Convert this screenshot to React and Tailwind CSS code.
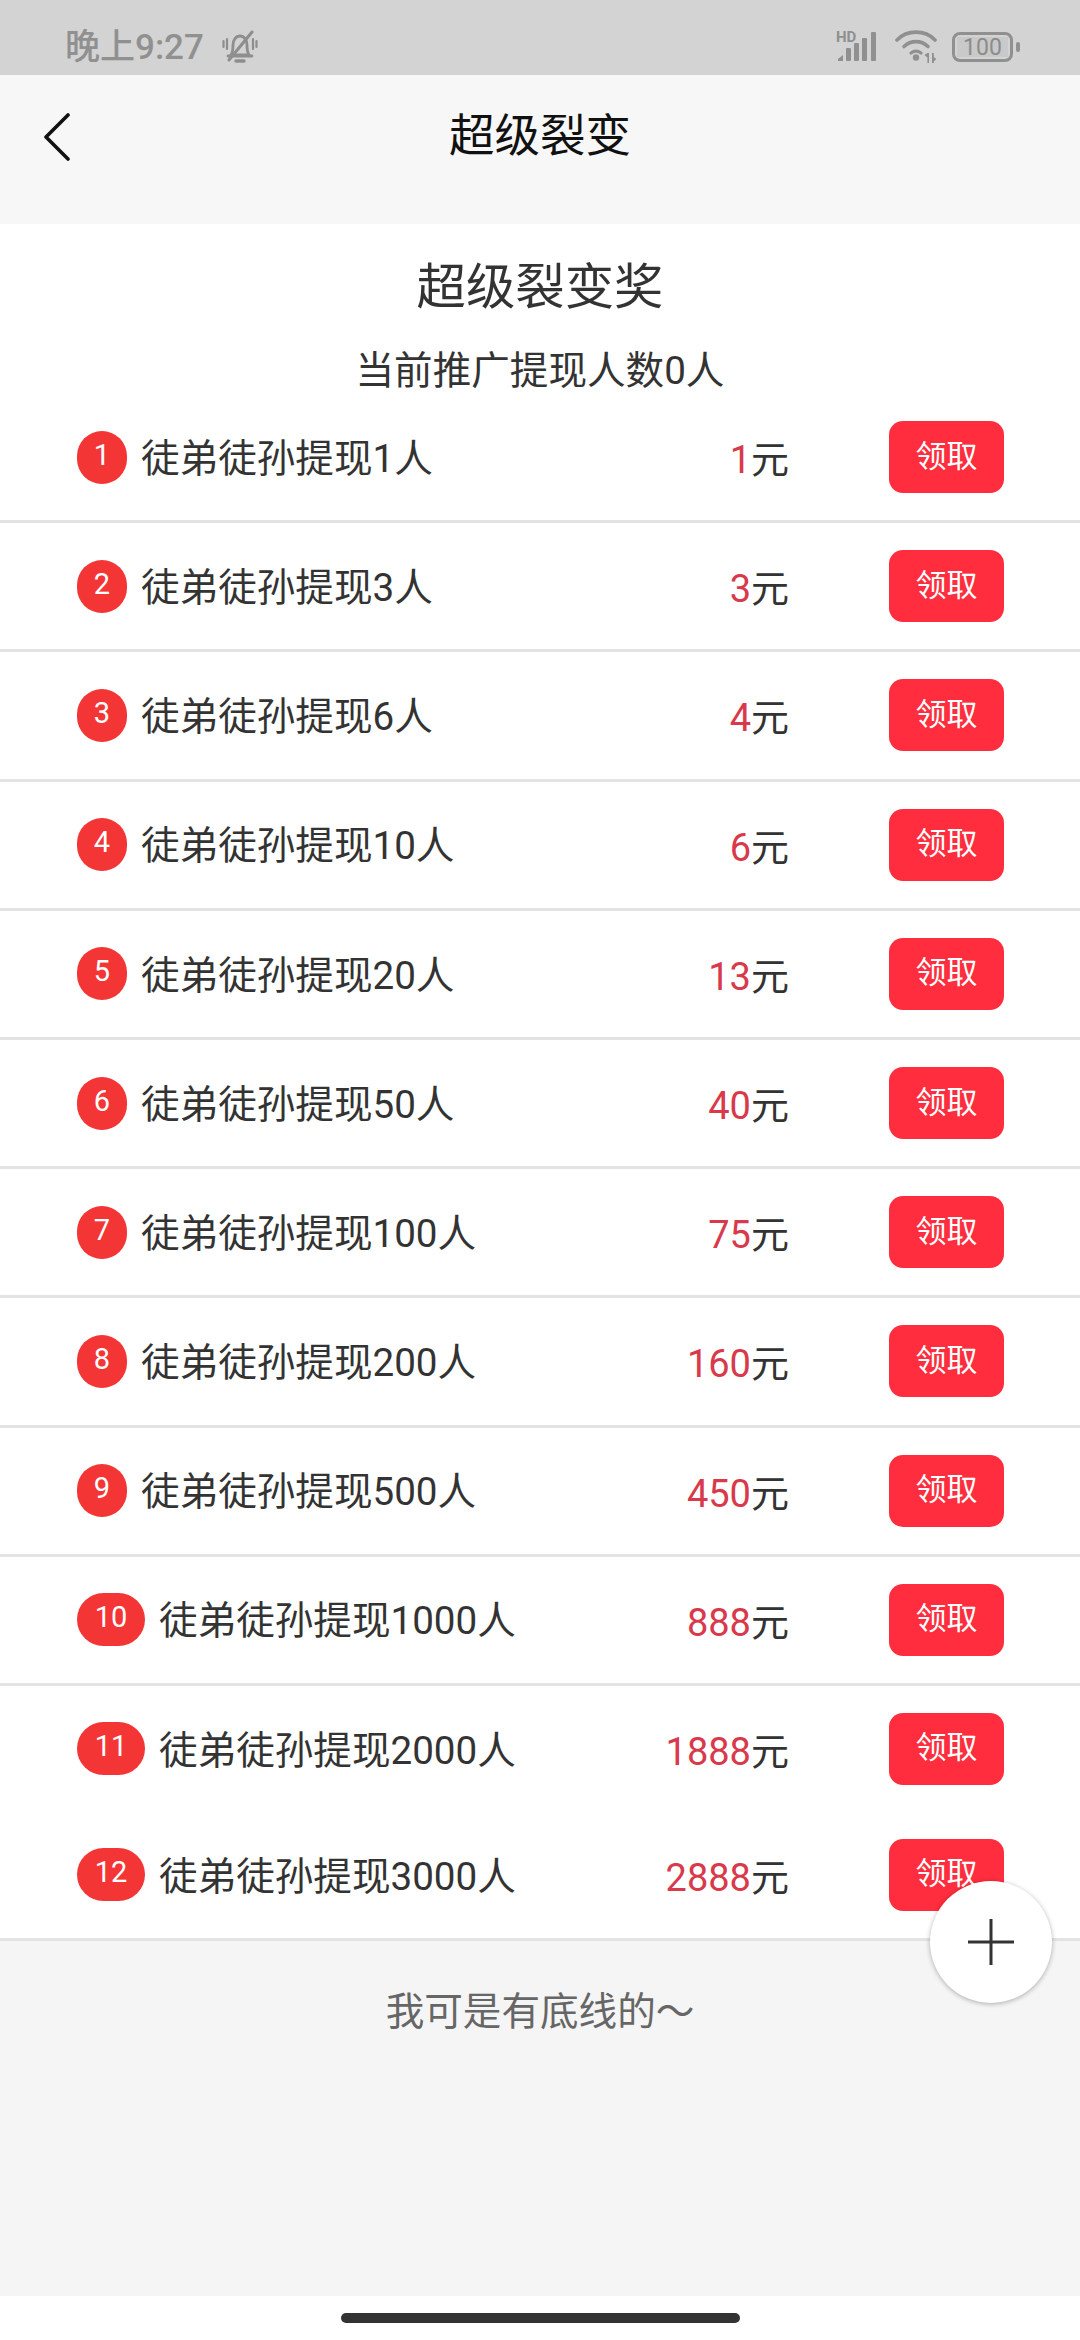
const rows = [
  ["1", "1人", "1"], ["2", "3人", "3"], ["3", "6人", "4"], ["4", "10人", "6"],
  ["5", "20人", "13"], ["6", "50人", "40"], ["7", "100人", "75"], ["8", "200人", "160"],
  ["9", "500人", "450"], ["10", "1000人", "888"], ["11", "2000人", "1888"], ["12", "3000人", "2888"],
];

const font = "[font-family:Roboto,'Noto_Sans_CJK_SC',sans-serif]";

function BellOff() {
  return (
    <svg width="36" height="34" viewBox="0 0 36 34" fill="none" stroke="#8e8e8e" strokeWidth="2.800" strokeLinecap="round">
      <path d="M9 25c2-3 2-6 2-10 0-5 3-9 7-9s7 4 7 9c0 4 0 7 2 10z" />
      <path d="M6 26h24" />
      <path d="M14 31h8" strokeWidth="3.400" />
      <path d="M5 9v10M1.500 11v6M31 9v10M34.500 11v6" strokeWidth="2.200" />
      <path d="M7 30 30 2" strokeWidth="3" />
    </svg>
  );
}

function Signal() {
  return (
    <div className="relative w-[46px] h-[32px]">
      <span className="absolute left-0 -top-[1px] text-[15px] leading-[15px] font-bold text-[#909090]">HD</span>
      <svg width="46" height="32" viewBox="0 0 46 32" className="block">
        <path d="M2 30v-2l5-4v6z" fill="#909090" />
        <rect x="10" y="17" width="5" height="13" rx="1" fill="#909090" />
        <rect x="18" y="12" width="5" height="18" rx="1" fill="#909090" />
        <rect x="26" y="7" width="5" height="23" rx="1" fill="#909090" />
        <rect x="35" y="1" width="5" height="29" rx="1" fill="#909090" />
      </svg>
    </div>
  );
}

function Wifi() {
  return (
    <svg width="44" height="34" viewBox="0 0 44 34" fill="none" className="block">
      <path d="M2 10C12-.5 30-.5 40 10" stroke="#909090" strokeWidth="3.6" strokeLinecap="round" />
      <path d="M9 16.5c7-6.500 17-6.500 24 0" stroke="#909090" strokeWidth="3.6" strokeLinecap="round" />
      <path d="M16 23c3.500-2.500 6.500-2.500 10 0" stroke="#909090" strokeWidth="3.2" strokeLinecap="round" />
      <circle cx="21" cy="27.500" r="3.200" fill="#909090" />
      <path d="M34 23v10h-1.600v-5.500l-3 -2.500 3-2z" fill="#909090" />
      <path d="M37 23h1.800v4l2.500 2-2.500 2.500v1.500H37z" fill="#909090" />
    </svg>
  );
}

function Battery() {
  return (
    <div className="flex items-center gap-[3px]">
      <div className="w-[61px] h-[30px] rounded-[8px] border-[3px] border-[#909090] p-[2px]">
        <div className={`w-full h-full bg-[#c9c9c9] flex items-center justify-center text-[23px] leading-none text-[#8c8c8c] ${font}`}>100</div>
      </div>
      <div className="w-[4px] h-[10px] rounded-full bg-[#909090]" />
    </div>
  );
}

function Row({ n, label, amount, index }) {
  const wide = n.length > 1;
  const noLine = index === rows.length - 2;
  return (
    <div className={`${noLine ? "h-[126px]" : "h-[129.2px] border-b-[3px] border-[#e3e3e3]"} flex items-center pl-[77px] pr-[76px]`}>
      <div className={`${wide ? "w-[68px]" : "w-[50px]"} h-[53px] rounded-full bg-[#f43535] text-white flex items-center justify-center text-[29px] leading-none`}>
        <span className="-translate-y-[2px]">{n}</span>
      </div>
      <div className="ml-[14px] flex-1 text-[38.6px] leading-none text-[#333333] translate-y-[2px]">徒弟徒孙提现{label}</div>
      <div className="text-[38px] leading-none text-[#333333] translate-y-[3px]">
        <span className="text-[#d8394b]">{amount}</span>元
      </div>
      <div className="ml-[100px] w-[115px] h-[72px] rounded-[14px] bg-[#ff2d3d] text-white text-[31px] leading-none flex items-center justify-center">
        <span className="-translate-y-[1px]">领取</span>
      </div>
    </div>
  );
}

export default function App() {
  return (
    <div className={`relative w-[1080px] h-[2340px] flex flex-col bg-white overflow-hidden ${font}`}>
      <div className="h-[75px] bg-[#d3d3d3] flex items-center justify-between pl-[65px] pr-[60px] pt-[19px]">
        <div className="flex items-center gap-[18px]">
          <span className="text-[35px] leading-none font-medium text-[#909090]">晚上9:27</span>
          <BellOff />
        </div>
        <div className="flex items-center gap-[13px]">
          <Signal />
          <Wifi />
          <Battery />
        </div>
      </div>

      <div className="h-[149px] bg-[#f7f7f7] grid grid-cols-[1fr_auto_1fr] items-start pt-[38px]">
        <svg width="28" height="48" viewBox="0 0 28 48" fill="none" className="ml-[44px]">
          <path d="M24 2 2 24l22 22" stroke="#111111" strokeWidth="3.600" strokeLinecap="round" strokeLinejoin="round" />
        </svg>
        <div className="text-[45.500px] leading-[48px] text-[#111111]">超级裂变</div>
        <div />
      </div>

      <div className="h-[170px] flex flex-col items-center">
        <div className="mt-[39px] text-[49.4px] leading-[48px] text-[#333333]">超级裂变奖</div>
        <div className="mt-[37px] text-[38.6px] leading-[46px] text-[#333333]">当前推广提现人数0人</div>
      </div>

      <div>
        {rows.map((r, i) => (
          <Row key={r[0]} n={r[0]} label={r[1]} amount={r[2]} index={i} />
        ))}
      </div>

      <div className="flex-1 bg-[#f5f5f5] flex justify-center pt-[48px]">
        <div className="text-[38.6px] leading-[46px] text-[#666666]">我可是有底线的～</div>
      </div>

      <div className="h-[44px] bg-white flex items-start justify-center pt-[17px]">
        <div className="w-[399px] h-[10px] rounded-full bg-[#333333]" />
      </div>

      <div className="absolute left-[930px] top-[1881px] w-[122px] h-[122px] rounded-full bg-white shadow-[0_1px_5px_rgba(0,0,0,0.3)] flex items-center justify-center">
        <svg width="46" height="46" viewBox="0 0 46 46" fill="none">
          <path d="M23 0v46M0 23h46" stroke="#333333" strokeWidth="3" />
        </svg>
      </div>
    </div>
  );
}
